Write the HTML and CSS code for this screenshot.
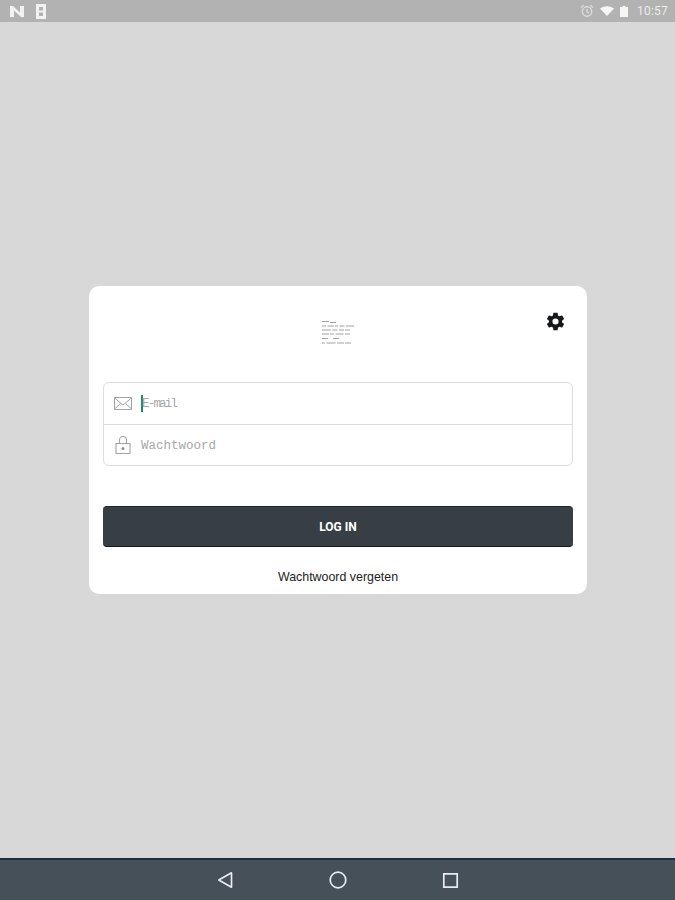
FILE: index.html
```html
<!DOCTYPE html>
<html lang="nl">
<head>
<meta charset="utf-8">
<title>Inloggen</title>
<link rel="stylesheet" href="styles.css">
</head>
<body>
<div class="screen">
  <header class="status">
    <div class="status-left">
      <svg class="ic-n" viewBox="0 0 14 11" width="14" height="11"><path d="M0 11V0h3l7 6.500V0h4v11h-3L4 4.500V11z" fill="#f2f2f2"/></svg>
      <svg class="ic-sim" viewBox="0 0 10 15" width="10" height="15"><path fill-rule="evenodd" d="M0 0h10v15H0zM3 3v3.500h4V3zM3 8.500V12h4V8.500z" fill="#f2f2f2"/></svg>
    </div>
    <div class="status-right">
      <svg viewBox="0 0 14 14" width="14" height="14"><circle cx="7" cy="7.500" r="4.700" fill="none" stroke="#dcdcdc" stroke-width="1.400"/><path d="M7 5v3l2 1M1 3.500 3.500 1.200M13 3.500 10.500 1.200" fill="none" stroke="#dcdcdc" stroke-width="1.300"/></svg>
      <svg viewBox="0 0 14 10" width="14" height="10"><path d="M0 2.500Q7-2 14 2.500L7 10z" fill="#f6f6f6"/></svg>
      <svg viewBox="0 0 8 11" width="8" height="11"><path d="M0 1h2.500V0h3v1H8v10H0z" fill="#f6f6f6"/></svg>
      <span class="clock">10:57</span>
    </div>
  </header>

  <main class="stage">
    <section class="card">
      <div class="card-head">
        <svg class="logo" viewBox="0 0 34 23" width="34" height="23">
          <g stroke="#8a8a8a" stroke-width="0.800">
            <path d="M1 .5h7M9 1.500h6"/>
            <path d="M1 5h4M6.500 5h6M14 5h3M18.500 5h5M25 5h8"/>
            <path d="M1 9h9M11.500 9h5M18 9h5M24 9h5"/>
            <path d="M1 13h7M9 13h4M14.500 13h8M24 13h5"/>
            <path d="M1 17.500h6M12 17.500h6"/>
            <path d="M1 22h3M5.500 22h9M16 22h7M24 22h6"/>
          </g>
        </svg>
        <svg class="gear" viewBox="0 0 24 24" width="21" height="21"><path fill="#15191c" fill-rule="evenodd" d="M19.430 12.980c.04-.32.070-.640.070-.980s-.030-.660-.070-.980l2.110-1.650c.190-.150.240-.420.120-.640l-2-3.460c-.120-.220-.390-.300-.610-.220l-2.490 1c-.520-.400-1.080-.730-1.690-.980l-.380-2.650A.488.488 0 0 0 14 2h-4c-.250 0-.460.180-.490.420l-.380 2.650c-.610.250-1.170.590-1.690.980l-2.490-1c-.230-.090-.490 0-.610.220l-2 3.460c-.130.220-.070.490.120.640l2.110 1.650c-.040.320-.070.650-.070.980s.030.660.070.980l-2.110 1.650c-.190.150-.240.420-.120.640l2 3.460c.120.220.390.300.610.220l2.490-1c.520.400 1.080.730 1.690.980l.380 2.650c.030.240.240.420.490.420h4c.250 0 .460-.180.490-.420l.380-2.650c.610-.250 1.170-.590 1.690-.980l2.490 1c.230.090.490 0 .610-.220l2-3.460c.120-.220.070-.490-.120-.640zM12 15.500a3.500 3.500 0 1 1 0-7 3.500 3.500 0 0 1 0 7z"/></svg>
      </div>

      <div class="fields">
        <div class="field">
          <svg class="field-icon" viewBox="0 0 20 15" width="20" height="15"><path d="M1.500 1.500h17v12h-17zM1.500 2l8.500 7 8.500-7M1.500 13l6-5.500M18.500 13l-6-5.500" fill="none" stroke="#a3a3a3" stroke-width="1"/></svg>
          <span class="caret"></span>
          <span class="hint hint-mail">E-mail</span>
        </div>
        <div class="field">
          <svg class="field-icon" viewBox="0 0 20 20" width="20" height="20"><path d="M3 8.500h14v10H3zM6.500 8.500V5a3.500 3.500 0 0 1 7 0v3.500" fill="none" stroke="#a3a3a3" stroke-width="1.100"/><circle cx="10" cy="13.500" r="1.500" fill="#8f8f8f"/></svg>
          <span class="hint hint-pass">Wachtwoord</span>
        </div>
      </div>

      <button class="login" type="button">LOG IN</button>
      <a class="forgot">Wachtwoord vergeten</a>
    </section>
  </main>

  <nav class="navbar">
    <svg viewBox="0 0 18 18" width="18" height="18"><path d="M15.500 1.800v14.400L2.800 9z" fill="none" stroke="#e9ecee" stroke-width="1.700" stroke-linejoin="round"/></svg>
    <svg viewBox="0 0 18 18" width="18" height="18"><circle cx="9" cy="9" r="7.800" fill="none" stroke="#e9ecee" stroke-width="1.700"/></svg>
    <svg viewBox="0 0 18 18" width="18" height="18"><path d="M2.800 2.800h13.400v13.400H2.800z" fill="none" stroke="#e9ecee" stroke-width="1.700"/></svg>
  </nav>
</div>
</body>
</html>
```
FILE: styles.css
```css
* { box-sizing: border-box; }
html, body { margin: 0; height: 100%; }
body { font-family: "Roboto", "Liberation Sans", sans-serif; background: #d8d8d8; }
.screen { width: 675px; height: 900px; display: flex; flex-direction: column; overflow: hidden; }

.status { height: 22px; flex: none; background: #b2b2b2; display: flex; justify-content: space-between; align-items: center; padding: 0 7px 0 10px; }
.status-left { display: flex; align-items: center; gap: 12px; }
.status-right { display: flex; align-items: center; gap: 6px; }
.clock { color: #ececec; font-size: 12px; margin-left: 3px; letter-spacing: .2px; }

.stage { flex: 1; display: flex; align-items: center; justify-content: center; padding-left: 1px; }
.card { width: 498px; height: 308px; background: #fff; border-radius: 10px; padding: 0 14px; display: flex; flex-direction: column; }
.card-head { height: 96px; flex: none; display: flex; justify-content: center; position: relative; padding-top: 35px; }
.logo { display: block; }
.gear { position: absolute; right: 7px; top: 25px; }

.fields { height: 84px; flex: none; border: 1px solid #dddddd; border-radius: 6px; display: flex; flex-direction: column; }
.field { flex: 1; display: flex; align-items: center; padding-left: 9px; position: relative; }
.field + .field { border-top: 1px solid #dddddd; }
.field-icon { flex: none; }
.caret { width: 2px; height: 17px; background: #1f8a6c; margin-left: 8px; flex: none; }
.hint { font-family: "Liberation Mono", monospace; font-size: 12.5px; color: #a8a8a8; position: relative; top: 1px; }
.hint-mail { letter-spacing: -1.800px; margin-left: -1px; }
.hint-pass { margin-left: 8px; }

.login { height: 41px; flex: none; margin-top: 40px; border: 0; border-bottom: 1px solid #15181b; border-top: 1px solid #20262a; border-radius: 4px; background: #383f44; color: #fff; font-family: "Roboto", sans-serif; font-weight: 700; font-size: 12px; padding: 0; }
.forgot { margin-top: 23px; text-align: center; font-family: "Liberation Sans", sans-serif; font-size: 12.400px; color: #222; line-height: 14px; }

.navbar { height: 42px; flex: none; background: #465059; border-top: 2px solid #1e3040; display: flex; justify-content: center; align-items: center; gap: 94.500px; }
```
